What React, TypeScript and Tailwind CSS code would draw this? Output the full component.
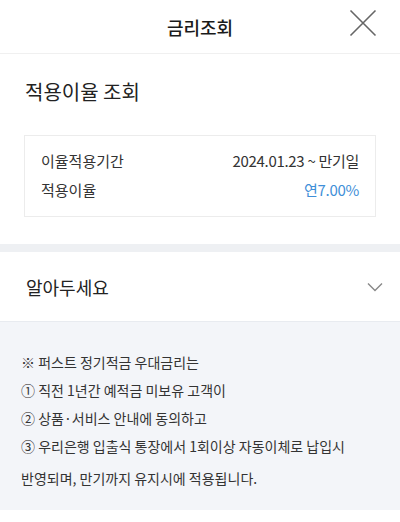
import React from 'react';

const font = { fontFamily: '"Noto Sans CJK KR", "Noto Sans", sans-serif' };

export default function App() {
  return (
    <div className="w-[400px] h-[522px] bg-white text-[#222] overflow-hidden" style={font}>
      {/* Header */}
      <header className="relative h-[54px] flex items-center justify-center border-b border-[#f0f0f0]">
        <h1 className="text-[18px] font-medium text-[#1a1a1a] leading-none">금리조회</h1>
        <button className="absolute right-[23px] top-[9px] w-[28px] h-[28px] flex items-center justify-center">
          <svg width="28" height="28" viewBox="0 0 28 28" fill="none" stroke="#666" strokeWidth="1.6">
            <path d="M1.5 1.5 L26.5 26.5 M26.5 1.5 L1.5 26.5" />
          </svg>
        </button>
      </header>

      {/* Rate section */}
      <section className="px-[24px] pt-[24px] pb-[27px]">
        <h2 className="text-[20px] leading-[28px] font-normal text-[#222] pl-[1px]">적용이율 조회</h2>
        <div className="mt-[29px] border border-[#ececec] px-[16px] pt-[14px] pb-[15px] flex flex-col gap-[7px] text-[15px] leading-[22px]">
          <div className="flex justify-between">
            <span className="text-[#333]">이율적용기간</span>
            <span className="text-[#333] tracking-[-0.3px]">2024.01.23 ~ 만기일</span>
          </div>
          <div className="flex justify-between">
            <span className="text-[#333]">적용이율</span>
            <span className="text-[#3f8fd8] tracking-[-0.3px]">연7.00%</span>
          </div>
        </div>
      </section>

      <div className="h-[8px] bg-[#eef0f3]" />

      {/* Notice accordion */}
      <div className="h-[70px] flex items-center justify-between pl-[26px] pr-[17px] border-b border-[#e8ebf0]">
        <span className="text-[18px] leading-none text-[#222]">알아두세요</span>
        <svg width="16" height="10" viewBox="0 0 16 10" fill="none" stroke="#888" strokeWidth="1.4">
          <path d="M1 1.5 L8 8.5 L15 1.5" />
        </svg>
      </div>

      <div className="bg-[#f3f5f9] px-[21px] pt-[30px] text-[14px] leading-[20px] text-[#333] h-[188px]">
        <div className="flex flex-col gap-[8px]">
          <p>※ 퍼스트 정기적금 우대금리는</p>
          <p>① 직전 1년간 예적금 미보유 고객이</p>
          <p>② 상품·서비스 안내에 동의하고</p>
          <p>③ 우리은행 입출식 통장에서 1회이상 자동이체로 납입시</p>
        </div>
        <p className="mt-[12px]">반영되며, 만기까지 유지시에 적용됩니다.</p>
      </div>
    </div>
  );
}
